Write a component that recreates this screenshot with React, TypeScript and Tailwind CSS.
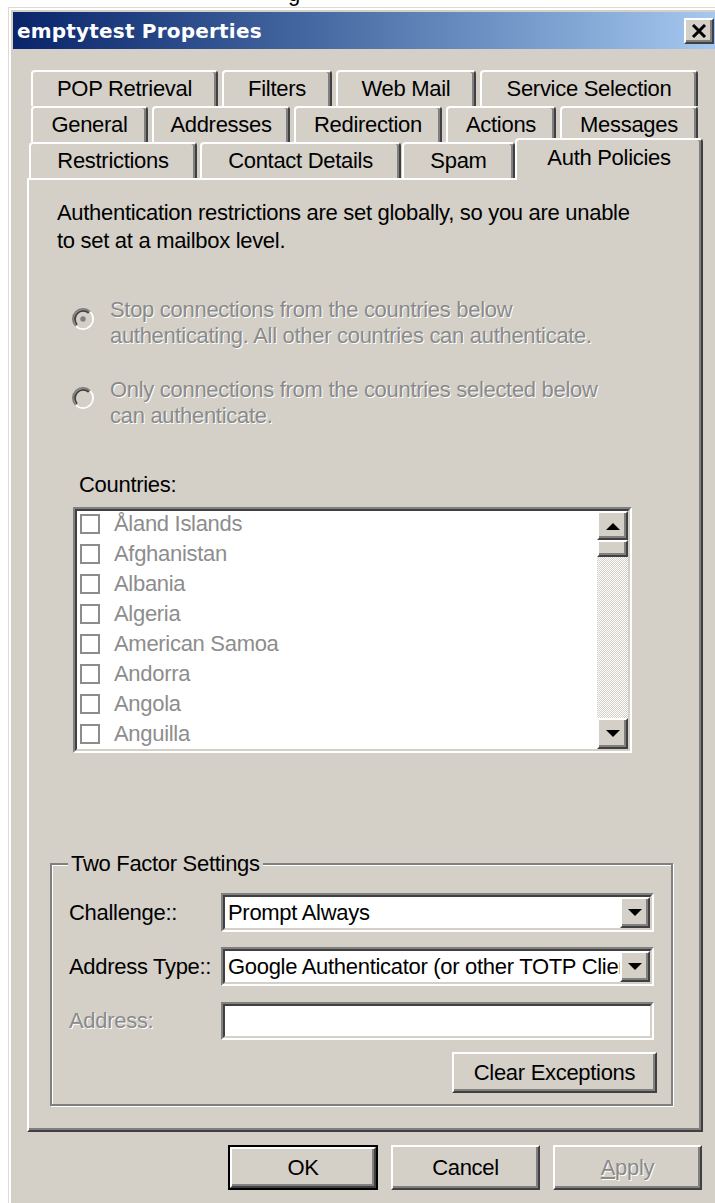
import React from 'react';
import clsx from 'clsx';

// classic 3D edges, doubled for the large dialog scale
const raised =
  'border-2 border-t-white border-l-white border-r-[#404040] border-b-[#404040] shadow-[inset_-2px_-2px_0_#808080] bg-[#d4d0c8]';
const sunkenOuter = 'border-2 border-t-[#808080] border-l-[#808080] border-r-white border-b-white';
const sunkenInner =
  'border-2 border-t-[#404040] border-l-[#404040] border-r-[#d4d0c8] border-b-[#d4d0c8] bg-white';
const disabledText = 'text-[#8a8a8a] [text-shadow:1px_1px_0_#ffffff]';

type TabDef = { label: string; width: string; extra?: string; selected?: boolean };

const rows: TabDef[][] = [
  [
    { label: 'POP Retrieval', width: 'w-[187px]' },
    { label: 'Filters', width: 'w-[110px]' },
    { label: 'Web Mail', width: 'w-[140px]' },
    { label: 'Service Selection', width: 'w-[218px]' },
  ],
  [
    { label: 'General', width: 'w-[117px]' },
    { label: 'Addresses', width: 'w-[138px]' },
    { label: 'Redirection', width: 'w-[148px]' },
    { label: 'Actions', width: 'w-[110px]' },
    { label: 'Messages', width: 'w-[138px]' },
  ],
];

const lastRow: TabDef[] = [
  { label: 'Restrictions', width: 'w-[168px]' },
  { label: 'Contact Details', width: 'w-[201px]', extra: 'ml-[3px]' },
  { label: 'Spam', width: 'w-[113px]', extra: 'ml-[1px]' },
  { label: 'Auth Policies', width: 'w-[188px]', selected: true },
];

const countries = [
  'Åland Islands',
  'Afghanistan',
  'Albania',
  'Algeria',
  'American Samoa',
  'Andorra',
  'Angola',
  'Anguilla',
];

function Tab({ tab }: { tab: TabDef }) {
  return (
    <div
      className={clsx(
        'flex shrink-0 items-center justify-center whitespace-nowrap rounded-t-[4px] border-x-2 border-t-2 border-t-white border-l-white border-r-[#404040] bg-[#d4d0c8] leading-none shadow-[inset_-2px_0_0_#808080]',
        tab.width,
        tab.extra,
        tab.selected ? 'relative z-10 -mb-[2px] h-[42px] pb-[4px]' : 'h-full'
      )}
    >
      {tab.label}
    </div>
  );
}

function Radio({ checked }: { checked?: boolean }) {
  return (
    <svg width="22" height="22" viewBox="0 0 24 24" className="shrink-0">
      <path d="M4.22 19.78A11 11 0 0 1 19.78 4.22" stroke="#808080" strokeWidth="2" fill="none" />
      <path d="M19.78 4.22A11 11 0 0 1 4.22 19.78" stroke="#ffffff" strokeWidth="2" fill="none" />
      <path d="M5.64 18.36A9 9 0 0 1 18.36 5.64" stroke="#404040" strokeWidth="2" fill="none" />
      <path d="M18.36 5.64A9 9 0 0 1 5.64 18.36" stroke="#d4d0c8" strokeWidth="2" fill="none" />
      {checked && <circle cx="12" cy="12" r="3" fill="#808080" />}
    </svg>
  );
}

function Arrow({ down }: { down?: boolean }) {
  return (
    <svg width="14" height="8" viewBox="0 0 14 8">
      <path d={down ? 'M0 0H14L7 7Z' : 'M0 8H14L7 1Z'} fill="#000" />
    </svg>
  );
}

function Combo({ value }: { value: string }) {
  return (
    <div className={clsx('h-full w-[433px]', sunkenOuter)}>
      <div className={clsx('flex h-full items-center', sunkenInner)}>
        <span className="min-w-0 flex-1 overflow-hidden whitespace-nowrap pl-[3px] leading-[28px]">{value}</span>
        <div className={clsx('flex h-full w-[30px] shrink-0 items-center justify-center', raised)}>
          <Arrow down />
        </div>
      </div>
    </div>
  );
}

export default function App() {
  return (
    <div className="relative h-[1203px] w-[715px] overflow-hidden bg-white font-['Liberation_Sans',Arial,sans-serif] text-[22px] tracking-[-0.3px] text-black">
      {/* bit of the page text above the dialog */}
      <div className="h-[7px] overflow-hidden pl-[288px]">
        <span className="-mt-[17px] block leading-[22px]">g</span>
      </div>

      <div className="ml-[8px] w-[712px] border-l border-t border-[#dedbd5] bg-[#d4d0c8] pl-[4px] pt-[4px] pb-[30px] shadow-[inset_2px_2px_0_#ffffff]">
        {/* title bar */}
        <div className="flex h-[37px] items-center justify-between bg-linear-to-r from-[#0a246a] to-[#a6caf0] pl-[4px] pr-[6px]">
          <span className="font-['DejaVu_Sans',sans-serif] text-[20px] font-bold tracking-[0.2px] text-white">
            emptytest Properties
          </span>
          <div className={clsx('flex h-[26px] w-[30px] items-center justify-center', raised)}>
            <svg width="16" height="14" viewBox="0 0 16 14">
              <path d="M2 1L14 13M14 1L2 13" stroke="#000" strokeWidth="3" />
            </svg>
          </div>
        </div>

        <div className="pl-[14px] pt-[21px]">
          {/* tab strip */}
          {rows.map((row, i) => (
            <div key={i} className="ml-[4px] flex h-[36px] gap-[4px]">
              {row.map((t) => (
                <Tab key={t.label} tab={t} />
              ))}
            </div>
          ))}
          <div className="ml-[2px] flex h-[36px] items-end">
            {lastRow.map((t) => (
              <Tab key={t.label} tab={t} />
            ))}
          </div>

          {/* tab page */}
          <div className="h-[954px] w-[676px] border-2 border-t-white border-l-white border-r-[#404040] border-b-[#404040] shadow-[inset_-2px_-2px_0_#808080]">
            <div className="ml-[28px] mt-[19px] whitespace-nowrap leading-[28px]">
              Authentication restrictions are set globally, so you are unable
              <br />
              to set at a mailbox level.
            </div>

            <div className="ml-[43px] mt-[42px] flex items-start">
              <div className="mt-[11px]">
                <Radio checked />
              </div>
              <div className={clsx('ml-[16px] whitespace-nowrap leading-[26px]', disabledText)}>
                Stop connections from the countries below
                <br />
                authenticating. All other countries can authenticate.
              </div>
            </div>

            <div className="ml-[43px] mt-[28px] flex items-start">
              <div className="mt-[10px]">
                <Radio />
              </div>
              <div className={clsx('ml-[16px] whitespace-nowrap leading-[26px]', disabledText)}>
                Only connections from the countries selected below
                <br />
                can authenticate.
              </div>
            </div>

            <div className="ml-[50px] mt-[43px] leading-[26px]">Countries:</div>

            {/* country list */}
            <div className={clsx('ml-[44px] mt-[9px] h-[246px] w-[559px]', sunkenOuter)}>
              <div className={clsx('flex h-full', sunkenInner)}>
                <div className="min-w-0 flex-1 overflow-hidden">
                  <div className="-mt-[2px]">
                    {countries.map((c) => (
                      <div key={c} className="flex h-[30px] items-center">
                        <span className="ml-[3px] h-[20px] w-[20px] shrink-0 border-2 border-[#8c8c8c] bg-white" />
                        <span className="ml-[14px] whitespace-nowrap leading-none text-[#8d8d8d]">{c}</span>
                      </div>
                    ))}
                  </div>
                </div>
                <div className="flex w-[31px] shrink-0 flex-col">
                  <div className={clsx('flex h-[29px] items-center justify-center', raised)}>
                    <Arrow />
                  </div>
                  <div className={clsx('h-[17px]', raised)} />
                  <div className="flex-1 bg-[repeating-conic-gradient(#d4d0c8_0_25%,#ffffff_0_50%)] bg-[length:2px_2px]" />
                  <div className={clsx('flex h-[31px] items-center justify-center', raised)}>
                    <Arrow down />
                  </div>
                </div>
              </div>
            </div>

            {/* two factor group */}
            <fieldset className="ml-[21px] mt-[98px] w-[623px] border-2 border-[#808080] pb-[11px] shadow-[inset_1px_1px_0_#ffffff,1px_1px_0_#ffffff]">
              <legend className="ml-[16px] bg-[#d4d0c8] px-[3px] leading-[26px]">Two Factor Settings</legend>
              <div className="mt-[16px] flex h-[39px] items-center pl-[17px]">
                <span className="w-[152px] shrink-0 leading-none">Challenge::</span>
                <Combo value="Prompt Always" />
              </div>
              <div className="mt-[15px] flex h-[39px] items-center pl-[17px]">
                <span className="w-[152px] shrink-0 whitespace-nowrap leading-none">Address Type::</span>
                <Combo value="Google Authenticator (or other TOTP Client)" />
              </div>
              <div className="mt-[16px] flex h-[38px] items-center pl-[17px]">
                <span className={clsx('w-[152px] shrink-0 leading-none', disabledText)}>Address:</span>
                <div className={clsx('h-full w-[433px]', sunkenOuter)}>
                  <div className={clsx('h-full', sunkenInner)} />
                </div>
              </div>
              <div className="mt-[12px] flex justify-end pr-[14px]">
                <button className={clsx('h-[41px] w-[205px] leading-none', raised)}>Clear Exceptions</button>
              </div>
            </fieldset>
          </div>

          {/* dialog buttons */}
          <div className="mt-[13px] flex h-[45px] w-[676px] justify-end gap-[13px] pr-[1px]">
            <div className="h-full w-[150px] border-2 border-black">
              <button className={clsx('h-full w-full leading-none', raised)}>OK</button>
            </div>
            <button className={clsx('h-full w-[149px] leading-none', raised)}>Cancel</button>
            <button className={clsx('h-full w-[149px] leading-none', raised, disabledText)}>
              <span className="underline">A</span>pply
            </button>
          </div>
        </div>
      </div>
    </div>
  );
}
